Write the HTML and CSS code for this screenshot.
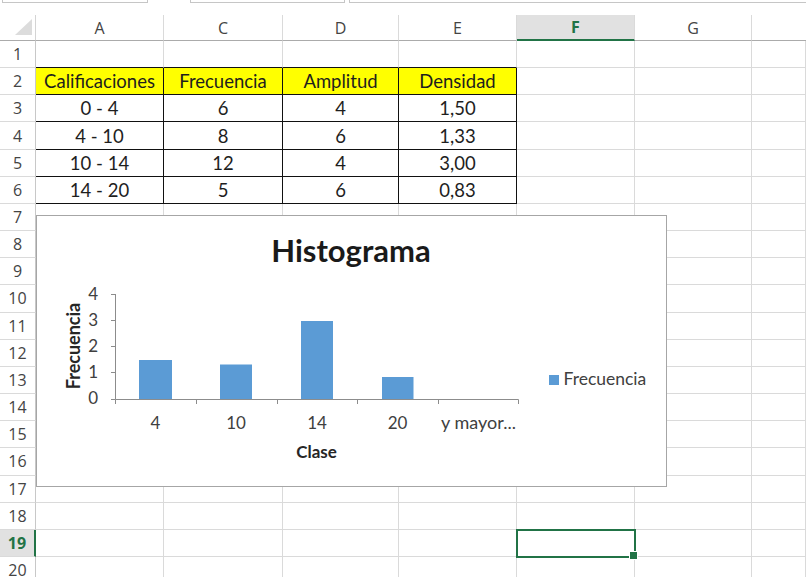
FILE: index.html
```html
<!DOCTYPE html>
<html lang="es">
<head>
<meta charset="utf-8">
<title>Histograma</title>
<link rel="stylesheet" href="styles.css">
</head>
<body>
<div class="bar">
  <div class="box box1"></div>
  <div class="box box2"></div>
  <div class="box box3"></div>
</div>
<div class="sheet">
  <div class="corner"><span class="tri"></span></div>
  <div class="ch">A</div><div class="ch">C</div><div class="ch">D</div><div class="ch">E</div><div class="ch sel">F</div><div class="ch">G</div><div class="ch last"></div>

  <div class="rh">1</div><div class="c ab"></div><div class="c ab"></div><div class="c ab"></div><div class="c ab"></div><div class="c"></div><div class="c"></div><div class="c"></div>

  <div class="rh">2</div><div class="t th">Calificaciones</div><div class="t th">Frecuencia</div><div class="t th">Amplitud</div><div class="t th">Densidad</div><div class="c"></div><div class="c"></div><div class="c"></div>

  <div class="rh">3</div><div class="t">0 - 4</div><div class="t">6</div><div class="t">4</div><div class="t">1,50</div><div class="c"></div><div class="c"></div><div class="c"></div>

  <div class="rh">4</div><div class="t">4 - 10</div><div class="t">8</div><div class="t">6</div><div class="t">1,33</div><div class="c"></div><div class="c"></div><div class="c"></div>

  <div class="rh">5</div><div class="t">10 - 14</div><div class="t">12</div><div class="t">4</div><div class="t">3,00</div><div class="c"></div><div class="c"></div><div class="c"></div>

  <div class="rh">6</div><div class="t">14 - 20</div><div class="t">5</div><div class="t">6</div><div class="t">0,83</div><div class="c"></div><div class="c"></div><div class="c"></div>

  <div class="rh">7</div><div class="c"></div><div class="c"></div><div class="c"></div><div class="c"></div><div class="c"></div><div class="c"></div><div class="c"></div>
  <div class="rh">8</div><div class="c"></div><div class="c"></div><div class="c"></div><div class="c"></div><div class="c"></div><div class="c"></div><div class="c"></div>
  <div class="rh">9</div><div class="c"></div><div class="c"></div><div class="c"></div><div class="c"></div><div class="c"></div><div class="c"></div><div class="c"></div>
  <div class="rh">10</div><div class="c"></div><div class="c"></div><div class="c"></div><div class="c"></div><div class="c"></div><div class="c"></div><div class="c"></div>
  <div class="rh">11</div><div class="c"></div><div class="c"></div><div class="c"></div><div class="c"></div><div class="c"></div><div class="c"></div><div class="c"></div>
  <div class="rh">12</div><div class="c"></div><div class="c"></div><div class="c"></div><div class="c"></div><div class="c"></div><div class="c"></div><div class="c"></div>
  <div class="rh">13</div><div class="c"></div><div class="c"></div><div class="c"></div><div class="c"></div><div class="c"></div><div class="c"></div><div class="c"></div>
  <div class="rh">14</div><div class="c"></div><div class="c"></div><div class="c"></div><div class="c"></div><div class="c"></div><div class="c"></div><div class="c"></div>
  <div class="rh">15</div><div class="c"></div><div class="c"></div><div class="c"></div><div class="c"></div><div class="c"></div><div class="c"></div><div class="c"></div>
  <div class="rh">16</div><div class="c"></div><div class="c"></div><div class="c"></div><div class="c"></div><div class="c"></div><div class="c"></div><div class="c"></div>
  <div class="rh">17</div><div class="c"></div><div class="c"></div><div class="c"></div><div class="c"></div><div class="c"></div><div class="c"></div><div class="c"></div>
  <div class="rh">18</div><div class="c"></div><div class="c"></div><div class="c"></div><div class="c"></div><div class="c"></div><div class="c"></div><div class="c"></div>
  <div class="rh sel">19</div><div class="c"></div><div class="c"></div><div class="c"></div><div class="c"></div><div class="c active"></div><div class="c"></div><div class="c"></div>
  <div class="rh">20</div><div class="c"></div><div class="c"></div><div class="c"></div><div class="c"></div><div class="c"></div><div class="c"></div><div class="c"></div>

  <div class="chart">
    <svg class="plot" width="629" height="270" viewBox="37 216 629 270" xmlns="http://www.w3.org/2000/svg">
      <text class="title" x="351" y="262" text-anchor="middle">Histograma</text>
      <g class="axis" fill="none" stroke="#8c8c8c" stroke-width="1">
        <path d="M115.5 294 V399.5 H518.5"/>
        <path d="M111 294.5 H115.5 M111 320.5 H115.5 M111 346.5 H115.5 M111 372.5 H115.5 M111 399.5 H115.5"/>
        <path d="M115.5 399.5 V404 M196.5 399.5 V404 M277.5 399.5 V404 M357.5 399.5 V404 M438.5 399.5 V404 M518.5 399.5 V404"/>
      </g>
      <g fill="#5b9bd5">
        <rect x="139" y="360" width="33" height="39"/>
        <rect x="220" y="364.5" width="32" height="34.5"/>
        <rect x="301" y="321" width="32" height="78"/>
        <rect x="382" y="377" width="31.5" height="22"/>
      </g>
      <g class="lbl" text-anchor="end">
        <text x="98" y="300">4</text>
        <text x="98" y="326">3</text>
        <text x="98" y="352">2</text>
        <text x="98" y="378">1</text>
        <text x="98" y="404">0</text>
      </g>
      <g class="lbl" text-anchor="middle">
        <text x="155.5" y="429">4</text>
        <text x="236" y="429">10</text>
        <text x="317" y="429">14</text>
        <text x="397.5" y="429">20</text>
        <text class="more" x="478.5" y="429">y mayor...</text>
      </g>
      <text class="atitle" x="316.5" y="458" text-anchor="middle">Clase</text>
      <text class="atitle vt" transform="translate(79.5 346) rotate(-90)" text-anchor="middle">Frecuencia</text>
      <rect x="549" y="375" width="10" height="10" fill="#5b9bd5"/>
      <text class="lbl leg" x="563.5" y="385">Frecuencia</text>
    </svg>
  </div>
</div>
</body>
</html>
```
FILE: styles.css
```css
* { box-sizing: border-box; }
html, body { margin: 0; padding: 0; background: #fff; }
body {
  width: 806px;
  height: 577px;
  overflow: hidden;
  font-family: Lato, "Open Sans", sans-serif;
}

.bar { display: flex; height: 4px; overflow: hidden; }
.box { height: 3px; border: 1px solid #c6c6c6; border-top: 0; }
.box1 { width: 146px; margin-left: 2px; }
.box2 { width: 155px; margin-left: 42px; }
.box3 { flex: 1; margin-left: 4px; border-right: 0; }

.sheet {
  position: relative;
  margin-top: 11px;
  display: grid;
  grid-template-columns: 36px 128px 119px 116px 118px 118px 117px 54px;
  grid-template-rows: 26px repeat(20, 27.17px);
}

.corner {
  display: flex;
  justify-content: flex-end;
  align-items: flex-end;
  padding: 0 3px 5px 0;
  border-right: 1px solid #d4d4d4;
  border-bottom: 1px solid #ababab;
}
.tri {
  width: 0; height: 0;
  border-left: 17px solid transparent;
  border-bottom: 16px solid #dcdcdc;
}

.ch {
  display: flex;
  align-items: center;
  justify-content: center;
  border-right: 1px solid #dadada;
  border-bottom: 1px solid #ababab;
  font-family: "Open Sans", sans-serif;
  font-size: 16px;
  color: #444;
}
.ch.last { border-right: 0; }
.ch.sel {
  background: #e1e1e1;
  color: #217346;
  font-weight: 700;
  border-bottom: 2px solid #217346;
}

.rh {
  display: flex;
  align-items: center;
  justify-content: center;
  border-right: 1px solid #c8c8c8;
  border-bottom: 1px solid #dadada;
  font-family: "Open Sans", sans-serif;
  font-size: 16px;
  color: #444;
}
.rh.sel {
  background: #e1e1e1;
  color: #217346;
  font-weight: 700;
  border-right: 2px solid #217346;
}

.c {
  border-right: 1px solid #dadada;
  border-bottom: 1px solid #dadada;
}
.c.ab { border-bottom-color: #111; }

.t {
  display: flex;
  align-items: center;
  justify-content: center;
  border-right: 1px solid #111;
  border-bottom: 1px solid #111;
  font-size: 18.5px;
  color: #1e1e1e;
}
.th { background: #ffff00; }

.active {
  position: relative;
  z-index: 2;
  outline: 2px solid #217346;
  outline-offset: -1px;
}
.active::after {
  content: "";
  position: absolute;
  right: -4px;
  bottom: -4px;
  width: 7px;
  height: 7px;
  background: #217346;
  border: 1px solid #fff;
}

.chart {
  position: absolute;
  left: 36px;
  top: 200px;
  width: 631px;
  height: 272px;
  border: 1px solid #a6a6a6;
  background: #fff;
  z-index: 1;
}
.plot { display: block; }
.plot text { font-family: Lato, "Open Sans", sans-serif; }
.title { font-size: 31px; font-weight: 700; fill: #1a1a1a; }
.lbl { font-size: 17px; fill: #404040; }
.more { font-size: 18px; }
.leg { font-size: 17.5px; }
.atitle { font-size: 17px; font-weight: 700; fill: #262626; }
.vt { font-size: 18px; }
```
